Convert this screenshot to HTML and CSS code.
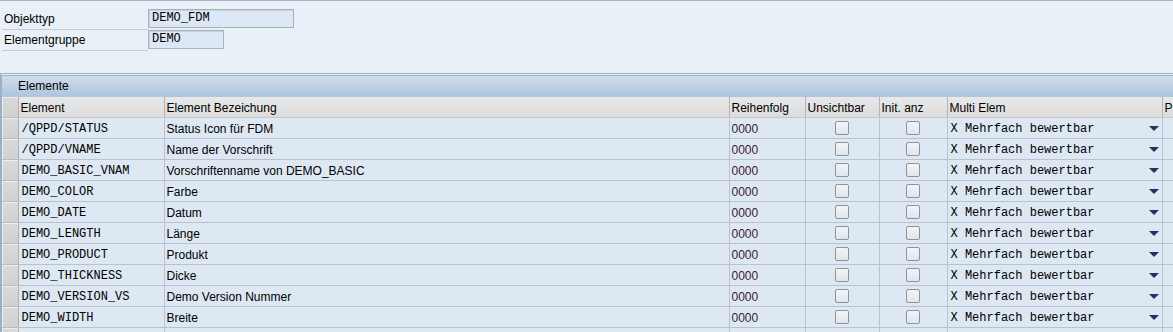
FILE: index.html
```html
<!DOCTYPE html>
<html lang="de">
  <head>
    <meta charset="UTF-8" />
    <meta name="viewport" content="width=device-width, initial-scale=1.0" />
    <title>Elemente</title>
    <link rel="stylesheet" href="styles.css">
  </head>

  <body>
    <!-- Header fields -->
    <div class="form">
      <div class="form-row">
        <label class="label">Objekttyp</label>
        <div class="field wide">DEMO_FDM</div>
      </div>
      <div class="form-row">
        <label class="label">Elementgruppe</label>
        <div class="field narrow">DEMO</div>
      </div>
    </div>

    <!-- Table control -->
    <div class="panel">
      <div class="panel-title">Elemente</div>
      <div class="grid-wrap">
        <table class="grid">
          <colgroup>
            <col class="c-sel" />
            <col class="c-elem" />
            <col class="c-desc" />
            <col class="c-order" />
            <col class="c-hide" />
            <col class="c-init" />
            <col class="c-multi" />
            <col class="c-p" />
          </colgroup>
          <thead>
            <tr>
              <th class="sel"></th>
              <th>Element</th>
              <th>Element Bezeichung</th>
              <th>Reihenfolg</th>
              <th>Unsichtbar</th>
              <th>Init. anz</th>
              <th>Multi Elem</th>
              <th>P</th>
            </tr>
          </thead>
          <tbody>
            <tr>
              <td class="sel"></td>
              <td class="mono">/QPPD/STATUS</td>
              <td>Status Icon für FDM</td>
              <td class="num">0000</td>
              <td class="chk"><span class="box"></span></td>
              <td class="chk"><span class="box"></span></td>
              <td class="mono drop">X Mehrfach bewertbar<span class="arrow"></span></td>
              <td></td>
            </tr>
            <tr>
              <td class="sel"></td>
              <td class="mono">/QPPD/VNAME</td>
              <td>Name der Vorschrift</td>
              <td class="num">0000</td>
              <td class="chk"><span class="box"></span></td>
              <td class="chk"><span class="box"></span></td>
              <td class="mono drop">X Mehrfach bewertbar<span class="arrow"></span></td>
              <td></td>
            </tr>
            <tr>
              <td class="sel"></td>
              <td class="mono">DEMO_BASIC_VNAM</td>
              <td>Vorschriftenname von DEMO_BASIC</td>
              <td class="num">0000</td>
              <td class="chk"><span class="box"></span></td>
              <td class="chk"><span class="box"></span></td>
              <td class="mono drop">X Mehrfach bewertbar<span class="arrow"></span></td>
              <td></td>
            </tr>
            <tr>
              <td class="sel"></td>
              <td class="mono">DEMO_COLOR</td>
              <td>Farbe</td>
              <td class="num">0000</td>
              <td class="chk"><span class="box"></span></td>
              <td class="chk"><span class="box"></span></td>
              <td class="mono drop">X Mehrfach bewertbar<span class="arrow"></span></td>
              <td></td>
            </tr>
            <tr>
              <td class="sel"></td>
              <td class="mono">DEMO_DATE</td>
              <td>Datum</td>
              <td class="num">0000</td>
              <td class="chk"><span class="box"></span></td>
              <td class="chk"><span class="box"></span></td>
              <td class="mono drop">X Mehrfach bewertbar<span class="arrow"></span></td>
              <td></td>
            </tr>
            <tr>
              <td class="sel"></td>
              <td class="mono">DEMO_LENGTH</td>
              <td>Länge</td>
              <td class="num">0000</td>
              <td class="chk"><span class="box"></span></td>
              <td class="chk"><span class="box"></span></td>
              <td class="mono drop">X Mehrfach bewertbar<span class="arrow"></span></td>
              <td></td>
            </tr>
            <tr>
              <td class="sel"></td>
              <td class="mono">DEMO_PRODUCT</td>
              <td>Produkt</td>
              <td class="num">0000</td>
              <td class="chk"><span class="box"></span></td>
              <td class="chk"><span class="box"></span></td>
              <td class="mono drop">X Mehrfach bewertbar<span class="arrow"></span></td>
              <td></td>
            </tr>
            <tr>
              <td class="sel"></td>
              <td class="mono">DEMO_THICKNESS</td>
              <td>Dicke</td>
              <td class="num">0000</td>
              <td class="chk"><span class="box"></span></td>
              <td class="chk"><span class="box"></span></td>
              <td class="mono drop">X Mehrfach bewertbar<span class="arrow"></span></td>
              <td></td>
            </tr>
            <tr>
              <td class="sel"></td>
              <td class="mono">DEMO_VERSION_VS</td>
              <td>Demo Version Nummer</td>
              <td class="num">0000</td>
              <td class="chk"><span class="box"></span></td>
              <td class="chk"><span class="box"></span></td>
              <td class="mono drop">X Mehrfach bewertbar<span class="arrow"></span></td>
              <td></td>
            </tr>
            <tr>
              <td class="sel"></td>
              <td class="mono">DEMO_WIDTH</td>
              <td>Breite</td>
              <td class="num">0000</td>
              <td class="chk"><span class="box"></span></td>
              <td class="chk"><span class="box"></span></td>
              <td class="mono drop">X Mehrfach bewertbar<span class="arrow"></span></td>
              <td></td>
            </tr>
            <tr>
              <td class="sel"></td>
              <td></td>
              <td></td>
              <td></td>
              <td></td>
              <td></td>
              <td></td>
              <td></td>
            </tr>
          </tbody>
        </table>
      </div>
    </div>
  </body>
</html>
```

FILE: styles.css
```css
body {
  margin: 0;
  height: 331px;
  overflow: hidden;
  background-color: #e9f0f7;
  border-top: 1px solid #a3b2c5;
  font-family: "Liberation Sans", Arial, sans-serif;
  font-size: 12px;
  color: #000;
}

/* header fields */
.form {
  padding: 8px 0 0 2px;
  height: 64px;
}

.form-row {
  display: flex;
  align-items: flex-start;
  height: 21px;
}

.label {
  width: 144px;
  height: 20px;
  line-height: 20px;
  padding-left: 2px;
  border-bottom: 1px solid #c3ccd6;
}

.field {
  box-sizing: border-box;
  height: 19px;
  line-height: 17px;
  padding-left: 3px;
  font-family: "Liberation Mono", "Courier New", monospace;
  font-size: 12px;
  background-color: #dce8f5;
  border: 1px solid #a9b1ba;
  box-shadow: inset 1px 1px 0 #c9d3dd;
}

.wide {
  width: 146px;
}

.narrow {
  width: 76px;
}

/* table control */
.panel {
  border-top: 1px solid #9fb0c6;
  border-left: 1px solid #9fb0c6;
  padding-top: 1px;
}

.panel-title {
  height: 21px;
  line-height: 21px;
  padding-left: 16px;
  border-top: 1px solid #9fb0c6;
  border-left: 1px solid #9fb0c6;
  background: linear-gradient(#cfdcea, #adc5dd);
}

.grid-wrap {
  overflow: hidden;
  border-left: 1px solid #9fb0c6;
}

.grid {
  border-collapse: collapse;
  table-layout: fixed;
  width: 1220px;
}

.c-sel { width: 16px; }
.c-elem { width: 146px; }
.c-desc { width: 565px; }
.c-order { width: 76px; }
.c-hide { width: 74px; }
.c-init { width: 68px; }
.c-multi { width: 215px; }
.c-p { width: 60px; }

.grid th,
.grid td {
  height: 18px;
  padding: 2px 0 0 2px;
  text-align: left;
  white-space: nowrap;
  overflow: hidden;
  border-right: 1px solid #b5c3d2;
  border-bottom: 1px solid #b5c3d2;
}

.grid th {
  font-weight: normal;
  background: linear-gradient(#e8e8e8, #dcdcdc);
  border-right-color: #b4b4b4;
  border-bottom-color: #c8c8c8;
}

.grid td {
  background-color: #dee8f3;
}

.grid td.mono {
  padding-left: 3px;
}

.grid .sel {
  padding: 0;
  height: 20px;
  background: linear-gradient(#dadada, #d0d0d0);
  border-right: 1px solid #b0b0b0;
  border-bottom: 1px solid #bcbcbc;
  box-shadow: inset 1px 1px 0 #ececec;
}

.mono {
  font-family: "Liberation Mono", "Courier New", monospace;
  font-size: 12px;
}

.num {
  color: #3a1a36;
}

.grid .chk {
  text-align: center;
  padding: 0;
  height: 20px;
}

.box {
  display: inline-block;
  vertical-align: middle;
  width: 12px;
  height: 12px;
  border: 1px solid #8e9399;
  border-radius: 2px;
  background: linear-gradient(#f2f5f8, #e0e6ec);
}

.drop {
  position: relative;
}

.arrow {
  position: absolute;
  right: 3px;
  top: 8px;
  width: 0;
  height: 0;
  border-left: 5px solid transparent;
  border-right: 5px solid transparent;
  border-top: 5px solid #1d3560;
}
```
